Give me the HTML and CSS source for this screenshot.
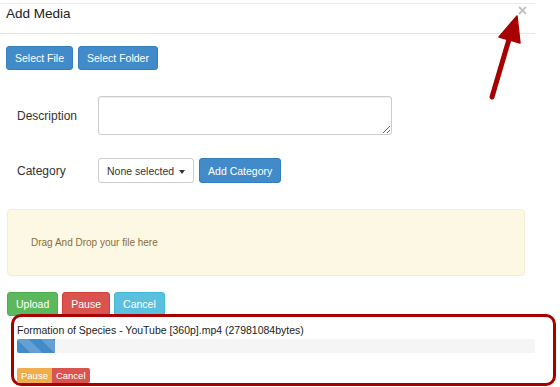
FILE: index.html
```html
<!DOCTYPE html>
<html lang="en">
<head>
  <meta charset="UTF-8">
  <meta name="viewport" content="width=device-width, initial-scale=1.0">
  <title>Add Media</title>
  <link rel="stylesheet" href="styles.css">
</head>
<body>

  <div id="modal">
    <div class="modal-header">
      <h4>Add Media</h4>
      <span class="close">&times;</span>
    </div>

    <div class="button-row">
      <button class="btn btn-primary">Select File</button>
      <button class="btn btn-primary">Select Folder</button>
    </div>

    <div class="form-row description-row">
      <label>Description</label>
      <textarea></textarea>
    </div>

    <div class="form-row category-row">
      <label>Category</label>
      <div class="button-row-tight">
        <button class="btn btn-default">None selected <span class="caret"></span></button>
        <button class="btn btn-primary">Add Category</button>
      </div>
    </div>

    <div id="dropzone">Drag And Drop your file here</div>

    <div class="upload-row">
      <button class="btn btn-success">Upload</button>
      <button class="btn btn-danger">Pause</button>
      <button class="btn btn-info">Cancel</button>
    </div>

    <div id="uploadItem">
      <div class="file-name">Formation of Species - YouTube [360p].mp4 (27981084bytes)</div>
      <div class="progress">
        <div class="progress-bar" style="width: 7.3%"></div>
      </div>
      <div class="btn-group">
        <button class="btn-xs btn-warning">Pause</button>
        <button class="btn-xs btn-danger">Cancel</button>
      </div>
    </div>
  </div>

  <!-- annotation arrow pointing at the close button -->
  <svg id="arrow" width="560" height="387" viewBox="0 0 560 387">
    <line x1="492" y1="97" x2="510" y2="36" stroke="#a60000" stroke-width="5" stroke-linecap="round"/>
    <polygon points="517,16 499,37 520,43" fill="#a60000" stroke="#a60000" stroke-width="1.5" stroke-linejoin="round"/>
  </svg>

</body>
</html>
```

FILE: styles.css
```css
* {
  margin: 0;
  padding: 0;
  box-sizing: border-box;
}

body {
  font-family: "Liberation Sans", Arial, sans-serif;
  color: #333;
  background-color: #fff;
  width: 560px;
  height: 387px;
  overflow: hidden;
  position: relative;
}

.modal-header {
  margin-top: 3px;
  width: 535px;
  height: 31px;
  border-top: 1px solid #ececec;
  border-bottom: 1px solid #e5e5e5;
  display: flex;
  justify-content: space-between;
  align-items: flex-start;
  padding: 0 8px 0 6px;
}

.modal-header h4 {
  font-size: 13.5px;
  font-weight: normal;
  line-height: 16px;
  padding-top: 2px;
  color: #222;
}

.close {
  font-size: 16px;
  font-weight: bold;
  line-height: 14px;
  color: #c0c0c0;
  padding-top: 0;
}

.btn {
  font-family: "Liberation Sans", Arial, sans-serif;
  font-size: 10.5px;
  height: 24px;
  line-height: 22px;
  padding: 0 8px;
  border: 1px solid transparent;
  border-radius: 3px;
  color: #fff;
  cursor: pointer;
}

.btn-primary {
  background-color: #428bca;
  border-color: #357ebd;
}

.btn-default {
  background-color: #fff;
  border-color: #ccc;
  color: #333;
  height: 25px;
}

.btn-success {
  background-color: #5cb85c;
  border-color: #4cae4c;
}

.btn-danger {
  background-color: #d9534f;
  border-color: #d43f3a;
}

.btn-info {
  background-color: #5bc0de;
  border-color: #46b8da;
}

.btn-warning {
  background-color: #f0ad4e;
  border-color: #eea236;
}

.button-row {
  display: flex;
  gap: 5px;
  margin-top: 12px;
  padding-left: 6px;
}

.form-row {
  display: flex;
  align-items: center;
  padding-left: 17px;
}

.form-row label {
  width: 81px;
  font-size: 12px;
}

.description-row {
  margin-top: 26px;
}

.description-row textarea {
  width: 294px;
  height: 39px;
  border: 1px solid #ccc;
  border-radius: 3px;
  box-shadow: inset 0 1px 1px rgba(0, 0, 0, 0.075);
}

.category-row {
  margin-top: 23px;
}

.button-row-tight {
  display: flex;
  gap: 5px;
}

.category-row .btn-primary {
  height: 25px;
}

.caret {
  display: inline-block;
  width: 0;
  height: 0;
  margin-left: 2px;
  vertical-align: middle;
  border-top: 4px solid #333;
  border-left: 3.5px solid transparent;
  border-right: 3.5px solid transparent;
}

#dropzone {
  margin: 26px 0 0 7px;
  width: 518px;
  height: 67px;
  background-color: #fcf8e3;
  border: 1px solid #faebcc;
  border-radius: 4px;
  color: #8a6d3b;
  font-size: 10px;
  display: flex;
  align-items: center;
  padding-left: 23px;
}

.upload-row {
  display: flex;
  gap: 4px;
  margin-top: 16px;
  padding-left: 7px;
}

#uploadItem {
  margin: -2px 0 0 11px;
  width: 545px;
  height: 72px;
  border: 3px solid #a80000;
  border-radius: 10px;
  padding: 6px 18px 0 3px;
  position: relative;
}

.file-name {
  font-size: 10.5px;
  line-height: 14px;
  color: #222;
}

.progress {
  margin-top: 2px;
  height: 14px;
  background-color: #f5f5f5;
  border-radius: 2px;
  overflow: hidden;
}

.progress-bar {
  height: 100%;
  background-color: #428bca;
  background-image: linear-gradient(45deg, rgba(255, 255, 255, 0.18) 25%, transparent 25%, transparent 50%, rgba(255, 255, 255, 0.18) 50%, rgba(255, 255, 255, 0.18) 75%, transparent 75%, transparent);
  background-size: 24px 24px;
}

.btn-group {
  display: flex;
  margin-top: 15px;
}

.btn-xs {
  font-family: "Liberation Sans", Arial, sans-serif;
  font-size: 9.5px;
  height: 15px;
  line-height: 13px;
  padding: 0 3px;
  border: 1px solid transparent;
  color: #fff;
  cursor: pointer;
}

.btn-group .btn-xs:first-child {
  border-radius: 2px 0 0 2px;
}

.btn-group .btn-xs:last-child {
  border-radius: 0 2px 2px 0;
}

#arrow {
  position: absolute;
  top: 0;
  left: 0;
  pointer-events: none;
}
```
